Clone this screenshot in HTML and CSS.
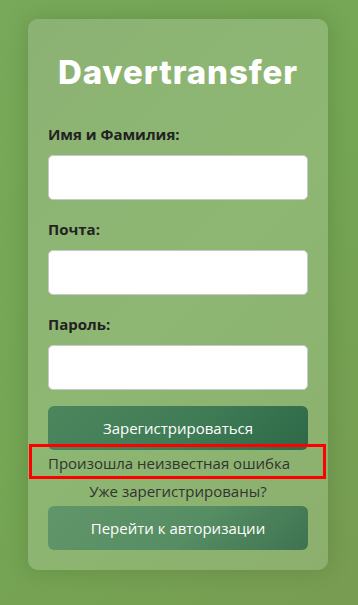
FILE: index.html
```html
<!DOCTYPE html>
<html lang="ru">
<head>
<meta charset="utf-8">
<title>Davertransfer</title>
<link rel="stylesheet" href="styles.css">
</head>
<body>
<main class="page">
  <form class="card">
    <h1 class="title">Davertransfer</h1>
    <label class="label" for="name">Имя и Фамилия:</label>
    <input class="input" id="name" type="text">
    <label class="label" for="mail">Почта:</label>
    <input class="input" id="mail" type="email">
    <label class="label" for="pass">Пароль:</label>
    <input class="input" id="pass" type="password">
    <button class="btn btn-primary" type="button">Зарегистрироваться</button>
    <p class="error">Произошла неизвестная ошибка</p>
    <p class="hint">Уже зарегистрированы?</p>
    <button class="btn btn-secondary" type="button">Перейти к авторизации</button>
  </form>
</main>
</body>
</html>
```
FILE: styles.css
```css
* { box-sizing: border-box; }
html, body { margin: 0; padding: 0; }
body {
  width: 358px;
  height: 605px;
  overflow: hidden;
  background: linear-gradient(135deg, #78a95a 0%, #74a654 50%, #789c52 100%);
  font-family: "Open Sans", "Noto Sans", sans-serif;
  color: #333;
}
.page {
  display: flex;
  padding: 19px 0 0 28px;
}
.card {
  width: 300px;
  padding: 20px;
  border-radius: 10px;
  background: linear-gradient(135deg, #8cb273 0%, #8db773 50%, #8daf6e 100%);
  box-shadow: 0 0 22px rgba(40, 70, 20, 0.22);
  display: flex;
  flex-direction: column;
}
.title {
  margin: 14px 0 0;
  height: 38px;
  line-height: 38px;
  text-align: center;
  font-family: "Inter", sans-serif;
  font-weight: 800;
  font-size: 33px;
  letter-spacing: 0.9px;
  color: #fff;
}
.label {
  margin-top: 34px;
  height: 18px;
  line-height: 18px;
  font-weight: 700;
  font-size: 15px;
  color: #222;
}
.label + .input { margin-top: 12px; }
.input ~ .label { margin-top: 20px; }
.title + .label { margin-top: 34px; }
.input {
  display: block;
  width: 260px;
  height: 45px;
  border: 1px solid #c8c8c8;
  border-radius: 5px;
  background: #fff;
  font: inherit;
}
.btn {
  width: 260px;
  height: 44px;
  border: none;
  border-radius: 6px;
  color: #fff;
  font-family: "Open Sans", "Noto Sans", sans-serif;
  font-size: 15px;
}
.btn-primary {
  margin-top: 16px;
  background: linear-gradient(135deg, #4c865d 0%, #3f7b55 55%, #2e6847 100%);
}
.btn-secondary {
  margin-top: 4px;
  background: linear-gradient(135deg, #609669 0%, #578d63 55%, #3d7350 100%);
}
.error {
  position: relative;
  margin: 2px 0 0;
  height: 22px;
  line-height: 22px;
  font-size: 15px;
  color: #333;
}
.error::after {
  content: "";
  position: absolute;
  top: -8px;
  bottom: -5px;
  left: -19px;
  right: -18px;
  border: 3px solid #f00;
}
.hint {
  margin: 6px 0 0;
  height: 22px;
  line-height: 22px;
  text-align: center;
  font-size: 15px;
  color: #333;
}
```
